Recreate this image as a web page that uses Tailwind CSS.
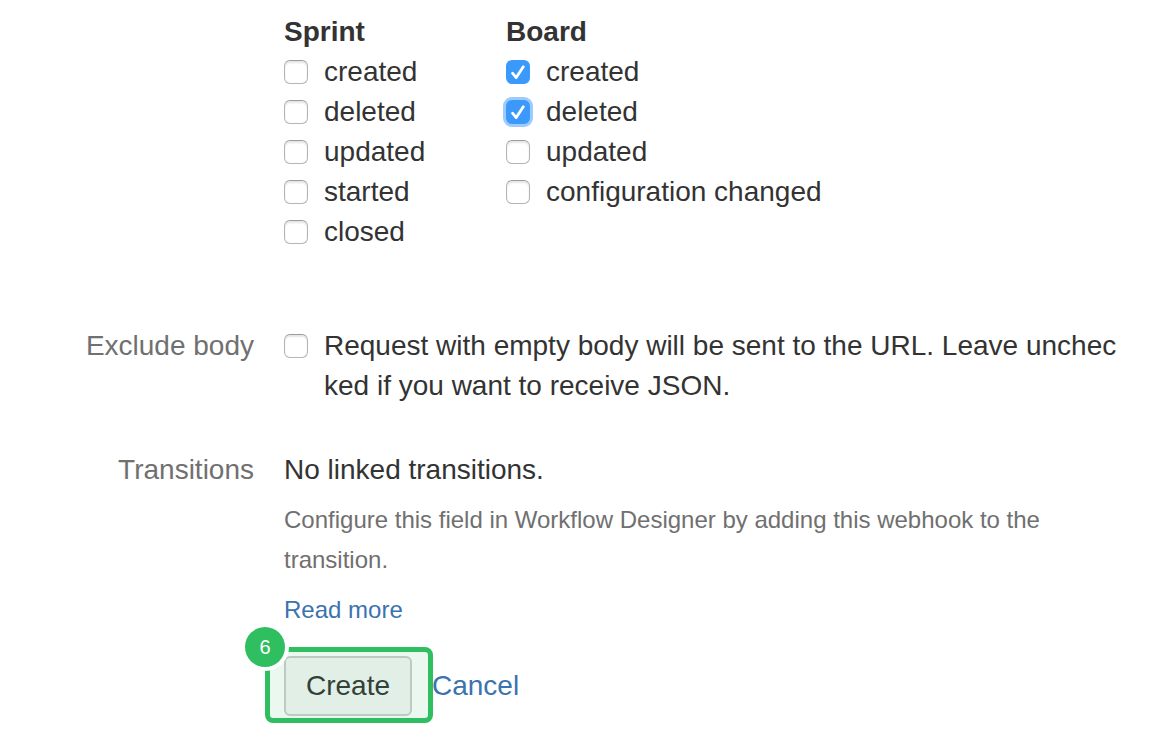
<!DOCTYPE html>
<html lang="en">
<head>
<meta charset="utf-8">
<meta name="viewport" content="width=device-width, initial-scale=1">
<title>Create webhook</title>
<script src="https://cdn.jsdelivr.net/npm/@tailwindcss/browser@4"></script>
</head>
<body class="bg-white text-[#333] font-['Liberation_Sans',Arial,sans-serif] text-[28px] leading-10">
<svg class="hidden"><symbol id="tick" viewBox="0 0 24 24"><path d="M6.5 13.2 10.2 17.6 17.3 6.8" fill="none" stroke="#fff" stroke-width="2.8" stroke-linecap="round" stroke-linejoin="round"/></symbol></svg>
<form class="pt-3 pr-11 pb-7">
  <div class="flex pl-[284px]">
    <fieldset class="w-[222px]">
      <legend class="font-bold">Sprint</legend>
      <label class="flex items-center gap-4"><input type="checkbox" class="size-6 shrink-0 appearance-none rounded-md border border-[#b4b4b4] border-t-[#9c9c9c] bg-white shadow-[inset_0_2px_2px_#e6e6e6]">created</label>
      <label class="flex items-center gap-4"><input type="checkbox" class="size-6 shrink-0 appearance-none rounded-md border border-[#b4b4b4] border-t-[#9c9c9c] bg-white shadow-[inset_0_2px_2px_#e6e6e6]">deleted</label>
      <label class="flex items-center gap-4"><input type="checkbox" class="size-6 shrink-0 appearance-none rounded-md border border-[#b4b4b4] border-t-[#9c9c9c] bg-white shadow-[inset_0_2px_2px_#e6e6e6]">updated</label>
      <label class="flex items-center gap-4"><input type="checkbox" class="size-6 shrink-0 appearance-none rounded-md border border-[#b4b4b4] border-t-[#9c9c9c] bg-white shadow-[inset_0_2px_2px_#e6e6e6]">started</label>
      <label class="flex items-center gap-4"><input type="checkbox" class="size-6 shrink-0 appearance-none rounded-md border border-[#b4b4b4] border-t-[#9c9c9c] bg-white shadow-[inset_0_2px_2px_#e6e6e6]">closed</label>
    </fieldset>
    <fieldset>
      <legend class="font-bold">Board</legend>
      <label class="flex items-center gap-4"><span class="grid size-6"><input type="checkbox" checked class="peer col-start-1 row-start-1 size-6 appearance-none rounded-md bg-[#3b99fc]"><svg class="pointer-events-none col-start-1 row-start-1 size-6" aria-hidden="true"><use href="#tick"/></svg></span>created</label>
      <label class="flex items-center gap-4"><span class="grid size-6"><input type="checkbox" checked class="peer col-start-1 row-start-1 size-6 appearance-none rounded-md bg-[#3b99fc] ring-3 ring-[#9dcbfb]"><svg class="pointer-events-none col-start-1 row-start-1 size-6" aria-hidden="true"><use href="#tick"/></svg></span>deleted</label>
      <label class="flex items-center gap-4"><input type="checkbox" class="size-6 shrink-0 appearance-none rounded-md border border-[#b4b4b4] border-t-[#9c9c9c] bg-white shadow-[inset_0_2px_2px_#e6e6e6]">updated</label>
      <label class="flex items-center gap-4"><input type="checkbox" class="size-6 shrink-0 appearance-none rounded-md border border-[#b4b4b4] border-t-[#9c9c9c] bg-white shadow-[inset_0_2px_2px_#e6e6e6]">configuration changed</label>
    </fieldset>
  </div>

  <div class="mt-[74px] flex gap-[30px]">
    <div id="exclude-label" class="w-[254px] shrink-0 text-right text-[#707070]">Exclude body</div>
    <div class="flex gap-4">
      <input id="exclude" type="checkbox" aria-labelledby="exclude-label" aria-describedby="exclude-text" class="mt-2 size-6 shrink-0 appearance-none rounded-md border border-[#b4b4b4] border-t-[#9c9c9c] bg-white shadow-[inset_0_2px_2px_#e6e6e6]">
      <label id="exclude-text" for="exclude" class="break-all">Request with empty body will be sent to the URL. Leave unchecked if you want to receive JSON.</label>
    </div>
  </div>

  <div class="mt-11 flex gap-[30px]">
    <div class="w-[254px] shrink-0 text-right text-[#707070]">Transitions</div>
    <div>
      <p>No linked transitions.</p>
      <p class="mt-2.5 text-2xl/10 text-[#707070]">Configure this field in Workflow Designer by adding this webhook to the transition.</p>
      <p class="mt-2.5 text-2xl/10"><a href="#" class="text-[#3b73af]">Read more</a></p>
    </div>
  </div>

  <div class="mt-[26px] flex items-center gap-5 pl-[284px]">
    <div class="relative">
      <button type="button" class="block h-15 w-32 rounded-md border-2 border-[#ccc] bg-[#f5f5f5]">Create</button>
      <!-- Step highlight -->
      <div class="pointer-events-none absolute -top-[9px] -right-[21px] -bottom-[7px] -left-[19px] rounded-lg border-5 border-[#2fbe60] bg-[#2fbe60]/10">
        <span class="absolute -top-[25px] -left-[25px] flex size-10 items-center justify-center rounded-full bg-[#2fbe60] text-xl text-white ring-4 ring-white">6</span>
      </div>
    </div>
    <a href="#" class="text-[#3b73af]">Cancel</a>
  </div>
</form>
</body>
</html>
